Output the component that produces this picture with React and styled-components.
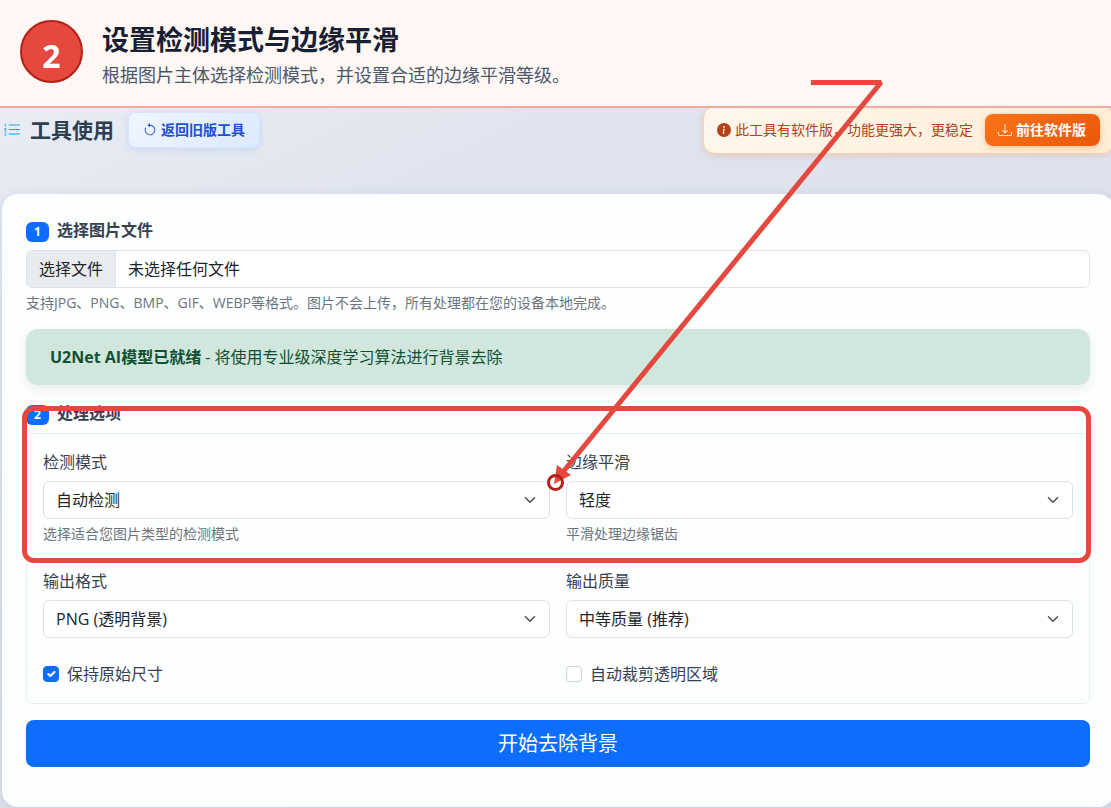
import React from "react";
import styled, { createGlobalStyle } from "styled-components";
import {
  BsListOl,
  BsArrowCounterclockwise,
  BsInfoCircleFill,
  BsDownload,
  BsChevronDown,
} from "react-icons/bs";

const GlobalStyle = createGlobalStyle`
  *, *::before, *::after { box-sizing: border-box; }
  body {
    margin: 0;
    font-family: "Open Sans", "Noto Sans CJK SC", sans-serif;
    font-size: 16px;
    line-height: 24px;
    color: #212529;
    background: linear-gradient(155deg, #eceff5 0%, #dfe4ee 30%, #d9dee9 100%);
  }
  button, input, select { font: inherit; }
`;

const Page = styled.div`
  position: relative;
  overflow: hidden;
`;

const StepHeader = styled.header`
  position: relative;
  z-index: 1;
  display: flex;
  align-items: center;
  gap: 19px;
  min-height: 108px;
  padding: 0 20px 4px;
  background: #fff7f4;
  border-bottom: 2px solid #f5aba3;
`;

const StepNumber = styled.span`
  display: grid;
  place-items: center;
  flex: none;
  width: 63px;
  height: 63px;
  padding-top: 10px;
  border: 2px solid #b42018;
  border-radius: 50%;
  background: #e5483f;
  color: #fff;
  font: 700 32px/40px "Noto Sans", sans-serif;
`;

const StepHeading = styled.div`
  padding-top: 8px;
`;

const StepTitle = styled.h1`
  margin: 0;
  font-size: 27px;
  line-height: 40px;
  font-weight: 700;
  color: #172033;
`;

const StepText = styled.p`
  margin: 0;
  font-size: 18px;
  line-height: 30px;
  color: #4b586c;
`;

const Toolbar = styled.div`
  display: flex;
  align-items: center;
  min-height: 48px;
  margin: -2px -3px 40px 3px;
`;

const ToolTitle = styled.h2`
  display: flex;
  align-items: center;
  gap: 9px;
  margin: 0 14px 0 0;
  font-size: 21px;
  line-height: 32px;
  font-weight: 600;
  color: #2c3e50;

  svg {
    width: 18px;
    height: 18px;
    color: #2f9bd8;
  }
`;

const BackButton = styled.button`
  display: flex;
  align-items: center;
  gap: 4px;
  height: 36px;
  padding: 0 14px;
  border: 1px solid #d5e6fd;
  border-radius: 8px;
  background: linear-gradient(135deg, #eff6ff, #dbeafe);
  box-shadow: 0 2px 6px rgba(59, 130, 246, 0.16);
  color: #1d4ed8;
  font-size: 14px;
  font-weight: 600;
`;

const Notice = styled.div`
  display: flex;
  align-items: center;
  gap: 12px;
  height: 48px;
  margin-left: auto;
  padding: 0 13px;
  border: 1px solid #fbd3a6;
  border-radius: 12px;
  background: linear-gradient(135deg, #fff7ed, #ffedd5);
  box-shadow: 0 2px 6px rgba(234, 88, 12, 0.16);
`;

const NoticeText = styled.span`
  display: flex;
  align-items: center;
  gap: 4px;
  font-size: 14px;
  color: #b5411a;
`;

const DownloadLink = styled.a`
  display: flex;
  align-items: center;
  gap: 4px;
  height: 32px;
  padding: 0 14px 0 13px;
  border-radius: 8px;
  background: linear-gradient(135deg, #f97316, #ea580c);
  box-shadow: 0 2px 6px rgba(234, 88, 12, 0.3);
  color: #fff;
  font-size: 14px;
  font-weight: 700;
  text-decoration: none;
`;

const Card = styled.main`
  margin: 0 -3px 1px 2px;
  padding: 24px 24px 40px;
  border-radius: 16px;
  background: #fdfefe;
  box-shadow: 0 4px 16px rgba(40, 60, 90, 0.1);
`;

const SectionTitle = styled.h3`
  display: flex;
  align-items: center;
  gap: 8px;
  margin: 0 0 8px;
  font-size: 16px;
  line-height: 24px;
  font-weight: 600;
  color: #374151;
`;

const Badge = styled.span`
  width: 23px;
  height: 20px;
  margin-top: 4px;
  border-radius: 6px;
  background: #0d6efd;
  color: #fff;
  font-size: 12px;
  line-height: 20px;
  font-weight: 700;
  text-align: center;
`;

const FilePicker = styled.label`
  display: flex;
  height: 38px;
  overflow: hidden;
  border: 1px solid #dee2e6;
  border-radius: 6px;
  background: #fff;
  line-height: 36px;
  cursor: pointer;
`;

const HiddenFile = styled.input`
  position: absolute;
  width: 1px;
  height: 1px;
  opacity: 0;
`;

const FileAction = styled.span`
  padding: 0 12px;
  border-right: 1px solid #dee2e6;
  background: #e9ecef;
`;

const FileName = styled.span`
  padding: 0 12px;
`;

const Help = styled.p`
  margin: 4px 0 0;
  font-size: 14px;
  line-height: 21px;
  color: #6c757d;
`;

const Alert = styled.div`
  margin: 16px 0;
  padding: 16px 24px;
  border-radius: 12px;
  background: #d1e7dd;
  box-shadow: 0 4px 12px rgba(0, 0, 0, 0.08);
  color: #0f5132;
`;

const Options = styled.section`
  position: relative;
`;

const Highlight = styled.div`
  position: absolute;
  top: 5px;
  left: -4px;
  right: -1px;
  height: 157px;
  border: 5px solid #e5483f;
  border-radius: 12px;
  pointer-events: none;
`;

const OptionGrid = styled.div`
  display: grid;
  grid-template-columns: 1fr 1fr;
  gap: 24px 16px;
  padding: 15px 16px 17px;
  border: 1px solid #e9ecef;
  border-radius: 6px;
`;

const FieldLabel = styled.label`
  display: block;
  margin-bottom: 6px;
  line-height: 26px;
  color: #374151;
`;

const SelectWrap = styled.div`
  position: relative;

  svg {
    position: absolute;
    top: 13px;
    right: 14px;
    width: 12px;
    height: 12px;
    stroke: currentColor;
    stroke-width: 1;
    color: #343a40;
    pointer-events: none;
  }
`;

const Select = styled.select`
  display: block;
  width: 100%;
  height: 38px;
  padding: 0 36px 0 12px;
  appearance: none;
  border: 1px solid #dee2e6;
  border-radius: 6px;
  background: #fff;
  color: #212529;
`;

const CheckLabel = styled.label`
  display: flex;
  align-items: center;
  gap: 8px;
  color: #374151;
`;

const Checkbox = styled.input`
  width: 16px;
  height: 16px;
  margin: 0;
  appearance: none;
  border: 1px solid #ced4da;
  border-radius: 4px;
  background: #fff;

  &:checked {
    border-color: #0d6efd;
    background: #0d6efd
      url("data:image/svg+xml,%3Csvg xmlns='http://www.w3.org/2000/svg' viewBox='0 0 20 20'%3E%3Cpath fill='none' stroke='%23fff' stroke-linecap='round' stroke-linejoin='round' stroke-width='3' d='m6 10 3 3 6-6'/%3E%3C/svg%3E")
      center / contain no-repeat;
  }
`;

const StartButton = styled.button`
  display: block;
  width: 100%;
  height: 47px;
  margin-top: 16px;
  border: 0;
  border-radius: 8px;
  background: #0d6efd;
  color: #fff;
  font-size: 20px;
`;

const Pointer = styled.svg`
  position: absolute;
  z-index: 2;
  top: 0;
  left: 0;
  width: 900px;
  height: 500px;
  pointer-events: none;
`;

function Field({ id, label, options, help }) {
  return (
    <div>
      <FieldLabel htmlFor={id}>{label}</FieldLabel>
      <SelectWrap>
        <Select id={id}>
          {options.map((o) => (
            <option key={o}>{o}</option>
          ))}
        </Select>
        <BsChevronDown aria-hidden="true" />
      </SelectWrap>
      {help && <Help>{help}</Help>}
    </div>
  );
}

export default function App() {
  return (
    <Page>
      <GlobalStyle />
      <StepHeader>
        <StepNumber>2</StepNumber>
        <StepHeading>
          <StepTitle>设置检测模式与边缘平滑</StepTitle>
          <StepText>根据图片主体选择检测模式，并设置合适的边缘平滑等级。</StepText>
        </StepHeading>
      </StepHeader>

      <Toolbar>
        <ToolTitle>
          <BsListOl aria-hidden="true" />
          工具使用
        </ToolTitle>
        <BackButton type="button">
          <BsArrowCounterclockwise size={14} aria-hidden="true" />
          返回旧版工具
        </BackButton>
        <Notice>
          <NoticeText>
            <BsInfoCircleFill size={14} aria-hidden="true" />
            此工具有软件版，功能更强大，更稳定
          </NoticeText>
          <DownloadLink href="#software">
            <BsDownload size={14} aria-hidden="true" />
            前往软件版
          </DownloadLink>
        </Notice>
      </Toolbar>

      <Card>
        <SectionTitle>
          <Badge>1</Badge>选择图片文件
        </SectionTitle>
        <FilePicker>
          <HiddenFile type="file" accept="image/*" />
          <FileAction>选择文件</FileAction>
          <FileName>未选择任何文件</FileName>
        </FilePicker>
        <Help>支持JPG、PNG、BMP、GIF、WEBP等格式。图片不会上传，所有处理都在您的设备本地完成。</Help>

        <Alert role="status">
          <strong>U2Net AI模型已就绪</strong> - 将使用专业级深度学习算法进行背景去除
        </Alert>

        <Options>
          <SectionTitle>
            <Badge>2</Badge>处理选项
          </SectionTitle>
          <OptionGrid>
            <Field
              id="mode"
              label="检测模式"
              options={["自动检测"]}
              help="选择适合您图片类型的检测模式"
            />
            <Field id="smooth" label="边缘平滑" options={["轻度"]} help="平滑处理边缘锯齿" />
            <Field id="format" label="输出格式" options={["PNG (透明背景)"]} />
            <Field id="quality" label="输出质量" options={["中等质量 (推荐)"]} />
            <CheckLabel>
              <Checkbox type="checkbox" defaultChecked />
              保持原始尺寸
            </CheckLabel>
            <CheckLabel>
              <Checkbox type="checkbox" />
              自动裁剪透明区域
            </CheckLabel>
          </OptionGrid>
          <Highlight />
        </Options>

        <StartButton type="button">开始去除背景</StartButton>
      </Card>

      <Pointer viewBox="0 0 900 500" aria-hidden="true">
        <path
          d="M811 82.5H881L563 472"
          fill="none"
          stroke="#e5483f"
          strokeWidth="5"
          strokeLinejoin="bevel"
        />
        <path d="M554 484L557 465L571 475Z" fill="#e5483f" />
        <circle cx="555.5" cy="482.5" r="7" fill="none" stroke="#b42018" strokeWidth="3" />
      </Pointer>
    </Page>
  );
}
